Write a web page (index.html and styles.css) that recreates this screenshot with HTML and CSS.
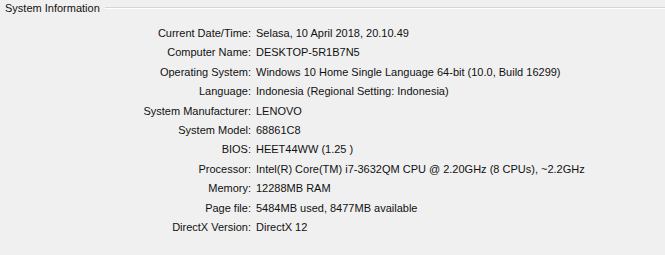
FILE: index.html
```html
<!DOCTYPE html>
<html lang="en">
<head>
    <meta charset="UTF-8">
    <title>System Information</title>
    <link rel="stylesheet" href="styles.css">
</head>
<body>
<div class="groupbox">
    <div class="legend">System Information</div>
    <div class="info">
        <div class="label">Current Date/Time:</div><div class="value">Selasa, 10 April 2018, 20.10.49</div>
        <div class="label">Computer Name:</div><div class="value">DESKTOP-5R1B7N5</div>
        <div class="label">Operating System:</div><div class="value">Windows 10 Home Single Language 64-bit (10.0, Build 16299)</div>
        <div class="label">Language:</div><div class="value">Indonesia (Regional Setting: Indonesia)</div>
        <div class="label">System Manufacturer:</div><div class="value">LENOVO</div>
        <div class="label">System Model:</div><div class="value">68861C8</div>
        <div class="label">BIOS:</div><div class="value">HEET44WW (1.25 )</div>
        <div class="label">Processor:</div><div class="value">Intel(R) Core(TM) i7-3632QM CPU @ 2.20GHz (8 CPUs), ~2.2GHz</div>
        <div class="label">Memory:</div><div class="value">12288MB RAM</div>
        <div class="label">Page file:</div><div class="value">5484MB used, 8477MB available</div>
        <div class="label">DirectX Version:</div><div class="value">DirectX 12</div>
    </div>
</div>
</body>
</html>
```
FILE: styles.css
```css
body {
    margin: 0;
    background-color: #f0f0f0;
    font-family: "Liberation Sans", Arial, sans-serif;
    font-size: 11px;
    color: #111;
    height: 255px;
}

.groupbox {
    position: relative;
    padding-top: 27px;
}

.legend {
    display: flex;
    align-items: center;
    gap: 5px;
    position: absolute;
    top: 2px;
    left: 5px;
    right: 0;
    line-height: 13px;
}

.legend::after {
    content: "";
    flex: 1;
    height: 1px;
    border-top: 1px solid #d5d5d5;
    background-color: #fff;
    margin-top: -1px;
}

.info {
    display: grid;
    grid-template-columns: 251px auto;
    column-gap: 5px;
    row-gap: 6.4px;
    line-height: 13px;
}

.label {
    text-align: right;
}
```
